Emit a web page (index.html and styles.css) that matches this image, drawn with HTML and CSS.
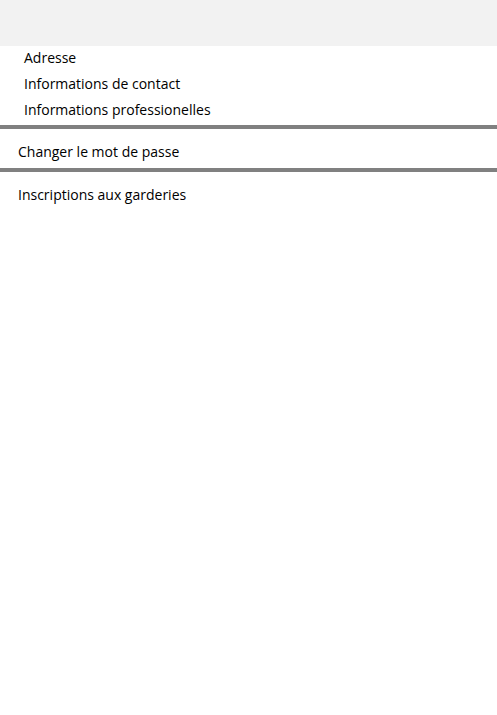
FILE: index.html
```html
<!DOCTYPE html>
<html lang="fr">
<head>
<meta charset="utf-8">
<link rel="stylesheet" href="styles.css">
</head>
<body>
<div class="header"></div>
<ul class="submenu">
  <li>Adresse</li>
  <li>Informations de contact</li>
  <li>Informations professionelles</li>
</ul>
<div class="bar"></div>
<div class="item">Changer le mot de passe</div>
<div class="bar"></div>
<div class="item">Inscriptions aux garderies</div>
</body>
</html>
```
FILE: styles.css
```css
html, body {
  margin: 0;
  padding: 0;
  background: #ffffff;
}
body {
  font-family: "Open Sans", "Noto Sans", sans-serif;
  font-size: 14px;
  color: #000;
  width: 497px;
  height: 715px;
}
.header {
  height: 46px;
  background: #f2f2f2;
}
.submenu {
  list-style: none;
  margin: 0;
  padding: 0 0 1px 24px;
}
.submenu li {
  height: 26px;
  line-height: 23px;
}
.bar {
  height: 4px;
  background: #808080;
}
.item {
  padding-left: 18px;
  height: 39px;
  line-height: 45px;
}
```
